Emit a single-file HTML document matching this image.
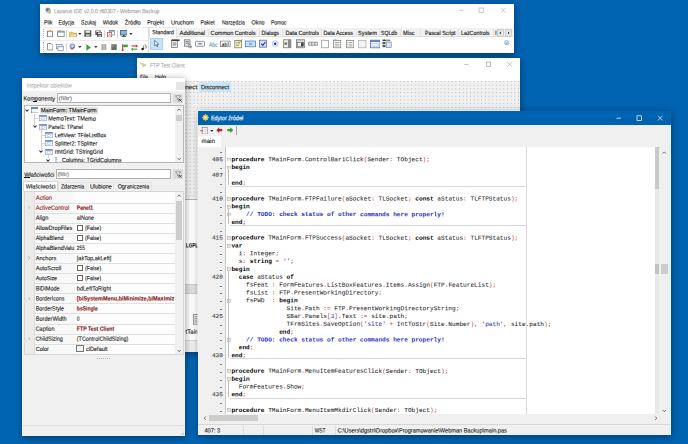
<!DOCTYPE html>
<html lang="pl"><head><meta charset="utf-8"><title>Lazarus IDE v2.0.0 r60307 - Webman Backup</title>
<style>
html,body{margin:0;padding:0;}
body{width:688px;height:444px;overflow:hidden;background:#0063b1;position:relative;font-family:'Liberation Sans',sans-serif;}
.a{position:absolute;box-sizing:border-box;}
.t{position:absolute;white-space:pre;line-height:1;transform-origin:0 50%;transform:rotate(0.04deg);-webkit-text-stroke:0.12px;}
.sh{box-shadow:0 1.5px 7px 0.5px rgba(0,0,0,.38);}
.sh2{box-shadow:0 0 0 0.9px rgba(200,222,243,.85),0 1.5px 7px 1px rgba(0,0,0,.38);}
.cl{overflow:hidden;}
.cd,.ln{font-family:'Liberation Mono',monospace;font-size:6.146px;color:#1c1c1c;-webkit-text-stroke:0.05px}.cd b{color:#000;-webkit-text-stroke:0}.cd b.cm{color:#1f2fc8}.ln{color:#383838;-webkit-text-stroke:0.08px}.cd b{font-weight:bold}.st{color:#2038c8}.sy{color:#d04040}
</style></head><body>
<div class="a sh" style="left:40.25px;top:3.80px;width:473.55px;height:49.70px;background:#fff;"></div>
<svg class="a" style="left:44.80px;top:7.00px;" width="6.60" height="7.00" viewBox="0 0 6.60 7.00"><circle cx="3" cy="3" r="2.6" fill="#8fa3c8"/><circle cx="4.3" cy="4.6" r="2.1" fill="#c9c089"/><circle cx="2.6" cy="2.6" r="1.1" fill="#4a64a8"/></svg>
<span id="t1" class="t" style="left:54px;top:8px;font-size:6.27px;color:#a0a0a0;transform:translate(0.00px,0.21px) rotate(0.04deg) scaleX(0.8253);">Lazarus IDE v2.0.0 r60307 - Webman Backup</span>
<svg class="a" style="left:454.80px;top:5.20px;" width="55.00" height="10.00" viewBox="0 0 55.00 10.00"><g stroke="#a6a6a6" stroke-width="0.6" fill="none"><path d="M4 5.3h4.6"/><rect x="24" y="3" width="4.4" height="4.4"/><path d="M46 3l4.6 4.6M50.6 3l-4.6 4.6"/></g></svg>
<span id="t2" class="t" style="left:44px;top:19px;font-size:6.27px;color:#111;transform:translate(0.00px,0.51px) rotate(0.04deg) scaleX(0.8306);">Plik</span>
<span id="t3" class="t" style="left:58px;top:19px;font-size:6.27px;color:#111;transform:translate(0.60px,0.51px) rotate(0.04deg) scaleX(0.8317);">Edycja</span>
<span id="t4" class="t" style="left:81px;top:19px;font-size:6.27px;color:#111;transform:translate(0.10px,0.51px) rotate(0.04deg) scaleX(0.7972);">Szukaj</span>
<span id="t5" class="t" style="left:102px;top:19px;font-size:6.27px;color:#111;transform:translate(0.75px,0.51px) rotate(0.04deg) scaleX(0.8751);">Widok</span>
<span id="t6" class="t" style="left:124px;top:19px;font-size:6.27px;color:#111;transform:translate(0.75px,0.51px) rotate(0.04deg) scaleX(0.8920);">Źródło</span>
<span id="t7" class="t" style="left:147px;top:19px;font-size:6.27px;color:#111;transform:translate(0.25px,0.51px) rotate(0.04deg) scaleX(0.8581);">Projekt</span>
<span id="t8" class="t" style="left:171px;top:19px;font-size:6.27px;color:#111;transform:translate(0.00px,0.51px) rotate(0.04deg) scaleX(0.8947);">Uruchom</span>
<span id="t9" class="t" style="left:200px;top:19px;font-size:6.27px;color:#111;transform:translate(0.60px,0.51px) rotate(0.04deg) scaleX(0.8120);">Pakiet</span>
<span id="t10" class="t" style="left:221px;top:19px;font-size:6.27px;color:#111;transform:translate(0.90px,0.51px) rotate(0.04deg) scaleX(0.8096);">Narzędzia</span>
<span id="t11" class="t" style="left:251px;top:19px;font-size:6.27px;color:#111;transform:translate(0.50px,0.51px) rotate(0.04deg) scaleX(0.8606);">Okno</span>
<span id="t12" class="t" style="left:271px;top:19px;font-size:6.27px;color:#111;transform:translate(0.00px,0.51px) rotate(0.04deg) scaleX(0.7941);">Pomoc</span>
<div class="a " style="left:40.25px;top:27.30px;width:108.00px;height:0.50px;background:#f0f0f0;"></div>
<div class="a " style="left:40.25px;top:39.60px;width:108.00px;height:0.50px;background:#ebebeb;"></div>
<div class="a " style="left:42.60px;top:28.50px;width:0.60px;height:9.50px;border-left:0.6px dotted #b5b5b5;"></div>
<div class="a " style="left:42.60px;top:42.00px;width:0.60px;height:9.50px;border-left:0.6px dotted #b5b5b5;"></div>
<svg class="a" style="left:46.60px;top:30.00px;" width="6.60" height="7.40" viewBox="0 0 6.60 7.40"><rect x="0.6" y="1.2" width="5" height="5.6" fill="#fff" stroke="#6e6e6e" stroke-width="0.8"/><rect x="1.6" y="0.2" width="2.4" height="1.4" fill="#e0a030"/></svg>
<svg class="a" style="left:56.60px;top:30.00px;" width="8.00" height="7.40" viewBox="0 0 8.00 7.40"><rect x="0.6" y="1.2" width="6.6" height="5.4" fill="#fff" stroke="#6e7a8c" stroke-width="0.8"/><rect x="0.6" y="1.2" width="6.6" height="1.4" fill="#8a97ad"/><rect x="2" y="0.2" width="2.2" height="1.2" fill="#e0a030"/></svg>
<div class="a " style="left:66.40px;top:29.50px;width:0.50px;height:8.50px;background:#d4d4d4;"></div>
<svg class="a" style="left:69.00px;top:30.00px;" width="8.40" height="7.40" viewBox="0 0 8.40 7.40"><path d="M0.5 2.2h2.6l0.8 0.9h3.8v3.8h-7.2z" fill="#f3d27a" stroke="#c79a3a" stroke-width="0.6"/><path d="M1.6 4h6.4l-1 2.9h-6.4z" fill="#f7e2a2" stroke="#c79a3a" stroke-width="0.5"/></svg>
<svg class="a" style="left:78.40px;top:32.80px;" width="3.80" height="2.20" viewBox="0 0 3.80 2.20"><path d="M0.2 0.1h3.4l-1.7 1.9z" fill="#333"/></svg>
<svg class="a" style="left:84.40px;top:30.20px;" width="7.60" height="7.00" viewBox="0 0 7.60 7.00"><rect x="0.3" y="0.3" width="7" height="6.4" fill="#5a5a5a"/><rect x="1.6" y="0.6" width="4.4" height="2.2" fill="#e8e8e8"/><rect x="2" y="4.2" width="3.6" height="2.5" fill="#bdbdbd"/></svg>
<svg class="a" style="left:94.80px;top:30.20px;" width="7.60" height="7.00" viewBox="0 0 7.60 7.00"><rect x="0.3" y="0.3" width="5.4" height="4.8" fill="#5a5a5a"/><rect x="1.2" y="0.6" width="3.4" height="1.6" fill="#e8e8e8"/><rect x="2" y="2.2" width="5.4" height="4.6" fill="#4d4d4d"/><rect x="3" y="2.6" width="3.4" height="1.5" fill="#e0e0e0"/><rect x="3.4" y="5" width="2.6" height="1.8" fill="#bdbdbd"/></svg>
<div class="a " style="left:104.40px;top:29.50px;width:0.50px;height:8.50px;background:#d4d4d4;"></div>
<svg class="a" style="left:107.00px;top:30.00px;" width="7.80" height="7.40" viewBox="0 0 7.80 7.40"><rect x="2.4" y="0.5" width="5" height="4.4" fill="#fff" stroke="#6f7f9f" stroke-width="0.7"/><rect x="2.4" y="0.5" width="5" height="1.2" fill="#7d8db0"/><rect x="0.5" y="2.6" width="4.2" height="4.4" fill="#fff" stroke="#b34444" stroke-width="0.7"/><path d="M1.6 5.8l1-1.6 1 1.6" stroke="#c03030" stroke-width="0.6" fill="none"/></svg>
<div class="a " style="left:116.90px;top:29.50px;width:0.50px;height:8.50px;background:#d4d4d4;"></div>
<svg class="a" style="left:119.80px;top:30.00px;" width="7.60" height="7.40" viewBox="0 0 7.60 7.40"><rect x="0.4" y="0.4" width="6.8" height="4.6" fill="#8db4e0" stroke="#3d5a80" stroke-width="0.8"/><rect x="3" y="5" width="1.6" height="1.2" fill="#3d4a5a"/><rect x="1.6" y="6.1" width="4.4" height="0.9" fill="#3d4a5a"/></svg>
<svg class="a" style="left:129.10px;top:32.80px;" width="3.80" height="2.20" viewBox="0 0 3.80 2.20"><path d="M0.2 0.1h3.4l-1.7 1.9z" fill="#333"/></svg>
<svg class="a" style="left:46.90px;top:43.40px;" width="6.40" height="7.40" viewBox="0 0 6.40 7.40"><path d="M0.5 0.5h3.6l1.8 1.8v4.6h-5.4z" fill="#fff" stroke="#7a7a7a" stroke-width="0.8"/></svg>
<svg class="a" style="left:56.40px;top:43.60px;" width="8.00" height="7.00" viewBox="0 0 8.00 7.00"><rect x="0.5" y="0.5" width="5.6" height="4.2" fill="#fff" stroke="#7b8ba8" stroke-width="0.7"/><rect x="2" y="2.2" width="5.6" height="4.2" fill="#fff" stroke="#7b8ba8" stroke-width="0.7"/><rect x="2" y="2.2" width="5.6" height="1.1" fill="#9fb0cc"/></svg>
<div class="a " style="left:66.40px;top:42.80px;width:0.50px;height:8.50px;background:#d4d4d4;"></div>
<svg class="a" style="left:68.80px;top:43.40px;" width="7.00" height="7.40" viewBox="0 0 7.00 7.40"><circle cx="3.4" cy="3.2" r="2.8" fill="#7f9fd8"/><circle cx="3.4" cy="3.2" r="1.4" fill="#c9d8f2"/><path d="M1.6 5l1.4 1.6 2.4-3" stroke="#d23030" stroke-width="1" fill="none"/></svg>
<svg class="a" style="left:78.40px;top:46.40px;" width="3.80" height="2.20" viewBox="0 0 3.80 2.20"><path d="M0.2 0.1h3.4l-1.7 1.9z" fill="#333"/></svg>
<svg class="a" style="left:86.40px;top:43.60px;" width="5.40" height="7.00" viewBox="0 0 5.40 7.00"><path d="M0.4 0.3l4.6 3.2-4.6 3.2z" fill="#3aa53a"/></svg>
<svg class="a" style="left:93.90px;top:46.40px;" width="3.80" height="2.20" viewBox="0 0 3.80 2.20"><path d="M0.2 0.1h3.4l-1.7 1.9z" fill="#333"/></svg>
<svg class="a" style="left:101.00px;top:43.80px;" width="6.00" height="6.60" viewBox="0 0 6.00 6.60"><rect x="0.4" y="0.2" width="5" height="6.2" fill="#a9a9a9"/><rect x="2.6" y="0.2" width="0.7" height="6.2" fill="#d9d9d9"/></svg>
<svg class="a" style="left:111.00px;top:43.80px;" width="6.00" height="6.60" viewBox="0 0 6.00 6.60"><rect x="0.3" y="0.3" width="5.4" height="5.8" fill="#6b6b6b"/><rect x="1.2" y="1.2" width="2" height="2" fill="#8d8d8d"/></svg>
<svg class="a" style="left:120.60px;top:43.60px;" width="7.20" height="7.40" viewBox="0 0 7.20 7.40"><rect x="1.2" y="0.3" width="1" height="6.4" fill="#a33"/><rect x="2.2" y="0.6" width="4.6" height="2.6" fill="#3aa53a"/><circle cx="1.6" cy="6.2" r="1" fill="#d23030"/></svg>
<svg class="a" style="left:131.00px;top:43.60px;" width="7.00" height="7.40" viewBox="0 0 7.00 7.40"><rect x="0.4" y="1.4" width="6" height="1.1" fill="#d23030"/><path d="M4.8 0.2l2 1.8-2 1.8z" fill="#d23030"/><rect x="0.8" y="4.6" width="5.6" height="1.1" fill="#3aa53a"/><path d="M2 3.4l-2 1.8 2 1.8z" fill="#3aa53a"/></svg>
<svg class="a" style="left:140.60px;top:44.40px;" width="6.00" height="6.60" viewBox="0 0 6.00 6.60"><path d="M3.6 0.4c1.6 0.4 2 2.4 1.2 4.2" stroke="#444" stroke-width="0.7" fill="none"/><circle cx="1.6" cy="5" r="1.3" fill="#222"/><rect x="2.5" y="1.4" width="0.6" height="3.8" fill="#222"/></svg>
<div class="a " style="left:148.40px;top:27.30px;width:0.50px;height:26.00px;background:#dcdcdc;"></div>
<div class="a " style="left:148.90px;top:27.60px;width:364.60px;height:9.60px;background:#f1f1f1;border-bottom:0.5px solid #dedede;"></div>
<div class="a " style="left:149.00px;top:27.40px;width:27.60px;height:10.20px;background:#fff;border:0.5px solid #e4e4e4;border-bottom:none;"></div>
<span id="t13" class="t" style="left:152px;top:29px;font-size:6.05px;color:#111;transform:translate(0.30px,0.20px) rotate(0.04deg) scaleX(0.8839);">Standard</span>
<span id="t14" class="t" style="left:179px;top:29px;font-size:6.05px;color:#111;transform:translate(0.60px,1.00px) rotate(0.04deg) scaleX(0.9561);">Additional</span>
<span id="t15" class="t" style="left:210px;top:29px;font-size:6.05px;color:#111;transform:translate(0.60px,1.00px) rotate(0.04deg) scaleX(0.9233);">Common Controls</span>
<span id="t16" class="t" style="left:261px;top:29px;font-size:6.05px;color:#111;transform:translate(0.50px,1.00px) rotate(0.04deg) scaleX(0.8674);">Dialogs</span>
<span id="t17" class="t" style="left:285px;top:29px;font-size:6.05px;color:#111;transform:translate(0.50px,1.00px) rotate(0.04deg) scaleX(0.9057);">Data Controls</span>
<span id="t18" class="t" style="left:323px;top:29px;font-size:6.05px;color:#111;transform:translate(0.50px,1.00px) rotate(0.04deg) scaleX(0.8776);">Data Access</span>
<span id="t19" class="t" style="left:358px;top:29px;font-size:6.05px;color:#111;transform:translate(0.00px,1.00px) rotate(0.04deg) scaleX(0.9417);">System</span>
<span id="t20" class="t" style="left:381px;top:29px;font-size:6.05px;color:#111;transform:translate(0.00px,1.00px) rotate(0.04deg) scaleX(0.8496);">SQLdb</span>
<span id="t21" class="t" style="left:403px;top:29px;font-size:6.05px;color:#111;transform:translate(0.00px,1.00px) rotate(0.04deg) scaleX(0.9243);">Misc</span>
<span id="t22" class="t" style="left:425px;top:29px;font-size:6.05px;color:#111;transform:translate(0.00px,1.00px) rotate(0.04deg) scaleX(0.8640);">Pascal Script</span>
<span id="t23" class="t" style="left:461px;top:29px;font-size:6.05px;color:#111;transform:translate(0.00px,1.00px) rotate(0.04deg) scaleX(0.8828);">LazControls</span>
<div class="a " style="left:207.80px;top:29.00px;width:0.50px;height:7.60px;background:#e2e2e2;"></div>
<div class="a " style="left:258.50px;top:29.00px;width:0.50px;height:7.60px;background:#e2e2e2;"></div>
<div class="a " style="left:282.00px;top:29.00px;width:0.50px;height:7.60px;background:#e2e2e2;"></div>
<div class="a " style="left:321.30px;top:29.00px;width:0.50px;height:7.60px;background:#e2e2e2;"></div>
<div class="a " style="left:355.50px;top:29.00px;width:0.50px;height:7.60px;background:#e2e2e2;"></div>
<div class="a " style="left:379.20px;top:29.00px;width:0.50px;height:7.60px;background:#e2e2e2;"></div>
<div class="a " style="left:399.80px;top:29.00px;width:0.50px;height:7.60px;background:#e2e2e2;"></div>
<div class="a " style="left:420.00px;top:29.00px;width:0.50px;height:7.60px;background:#e2e2e2;"></div>
<div class="a " style="left:458.30px;top:29.00px;width:0.50px;height:7.60px;background:#e2e2e2;"></div>
<div class="a " style="left:492.60px;top:29.00px;width:0.50px;height:7.60px;background:#e2e2e2;"></div>
<span id="t24" class="t" style="left:495px;top:29px;font-size:6.05px;color:#111;transform:translate(0.00px,1.00px) rotate(0.04deg);">I</span>
<svg class="a" style="left:497.20px;top:28.60px;" width="7.00" height="8.00" viewBox="0 0 7.00 8.00"><rect x="0.3" y="0.3" width="6.4" height="7.2" fill="#e6e6e6" stroke="#b4b4b4" stroke-width="0.5"/><path d="M2.6 2.2l-1.4 1.4 1.4 1.4z" fill="#222" transform="translate(1.2,0.3)"/></svg>
<svg class="a" style="left:504.60px;top:28.60px;" width="7.00" height="8.00" viewBox="0 0 7.00 8.00"><rect x="0.3" y="0.3" width="6.4" height="7.2" fill="#e6e6e6" stroke="#b4b4b4" stroke-width="0.5"/><path d="M1.8 2.2l1.4 1.4-1.4 1.4z" fill="#222" transform="translate(1.2,0.3)"/></svg>
<div class="a " style="left:150.00px;top:38.20px;width:13.00px;height:11.80px;background:#cce4f7;border:0.5px solid #a9cfee;"></div>
<svg class="a" style="left:153.60px;top:40.40px;" width="5.40" height="7.60" viewBox="0 0 5.40 7.60"><path d="M0.6 0.4v5.4l1.4-1.2 1 2.2 0.9-0.4-1-2.1h1.9z" fill="#fff" stroke="#1f3f78" stroke-width="0.6"/></svg>
<svg class="a" style="left:170.60px;top:39.40px;" width="9.40" height="9.40" viewBox="0 0 9.40 9.40"><rect x="0.6" y="1.2" width="6" height="7.4" fill="#e9e9e9" stroke="#6a6a6a" stroke-width="0.7"/><rect x="0.6" y="0.4" width="8" height="1.6" fill="#3c3c3c"/><path d="M1.8 4h3.4M1.8 5.8h3.4" stroke="#555" stroke-width="0.7"/></svg>
<svg class="a" style="left:184.20px;top:39.40px;" width="9.00" height="9.40" viewBox="0 0 9.00 9.40"><rect x="0.6" y="0.8" width="5.4" height="6.4" fill="#e4e4e4" stroke="#6a6a6a" stroke-width="0.7"/><path d="M1.6 2.6h3.2M1.6 4.2h3.2" stroke="#555" stroke-width="0.7"/><path d="M4.8 4.8v3.8l1-0.8 0.8 1.4 0.6-0.3-0.8-1.4h1.4z" fill="#fff" stroke="#333" stroke-width="0.5"/></svg>
<svg class="a" style="left:195.00px;top:39.40px;" width="10.20" height="9.40" viewBox="0 0 10.20 9.40"><rect x="0.5" y="2.3" width="9" height="5" rx="0.6" fill="#eef2f7" stroke="#68788f" stroke-width="0.7"/><path d="M3.6 4.8h3" stroke="#333" stroke-width="0.9"/></svg>
<span id="t25" class="t" style="left:208px;top:41px;font-size:6.05px;color:#5e86c4;transform:translate(0.90px,0.80px) rotate(0.04deg) scaleX(0.8153);">Abc</span>
<svg class="a" style="left:220.40px;top:39.40px;" width="10.80" height="9.40" viewBox="0 0 10.80 9.40"><rect x="0.5" y="2.1" width="9.6" height="5.6" fill="#fff" stroke="#7a7a7a" stroke-width="0.7"/><path d="M8.2 3v3.8" stroke="#222" stroke-width="0.6"/></svg>
<span id="t26" class="t" style="left:221px;top:42px;font-size:5.15px;color:#111;transform:translate(0.80px,0.13px) rotate(0.04deg) scaleX(0.9087);">ab</span>
<svg class="a" style="left:233.80px;top:39.40px;" width="9.00" height="9.40" viewBox="0 0 9.00 9.40"><rect x="0.8" y="1.4" width="6.6" height="7.4" fill="#f6f3d6" stroke="#7d7d5a" stroke-width="0.8"/><path d="M2 3.4h4M2 5h4M2 6.6h3" stroke="#6d8f4a" stroke-width="0.6"/><path d="M5 3.6l3.4-3.2" stroke="#c28b2c" stroke-width="1"/></svg>
<svg class="a" style="left:245.00px;top:39.40px;" width="11.00" height="9.40" viewBox="0 0 11.00 9.40"><rect x="0.5" y="2" width="10" height="5.8" fill="#bfe0f7" stroke="#4d88b8" stroke-width="0.8"/><path d="M4 5h3" stroke="#456" stroke-width="0.8"/></svg>
<svg class="a" style="left:259.20px;top:39.40px;" width="8.40" height="9.40" viewBox="0 0 8.40 9.40"><rect x="0.6" y="1.2" width="7" height="7" fill="#d6e2f7" stroke="#4f6fb0" stroke-width="0.8"/><path d="M2.2 4.6l1.6 1.8 2.6-3.4" stroke="#1a2f9a" stroke-width="1.1" fill="none"/></svg>
<svg class="a" style="left:272.00px;top:39.40px;" width="6.60" height="9.40" viewBox="0 0 6.60 9.40"><circle cx="3.2" cy="4.7" r="2.8" fill="#fff" stroke="#9aa8c8" stroke-width="0.7"/><circle cx="3.2" cy="4.7" r="1.2" fill="#1a1ad0"/></svg>
<svg class="a" style="left:283.40px;top:39.40px;" width="8.60" height="9.40" viewBox="0 0 8.60 9.40"><rect x="0.5" y="0.8" width="7.4" height="8" fill="#efefef" stroke="#6a6a6a" stroke-width="0.7"/><rect x="5" y="0.8" width="2.9" height="8" fill="#8a8a8a"/><rect x="1.4" y="3.4" width="2.8" height="2.4" fill="#777"/></svg>
<svg class="a" style="left:295.80px;top:39.40px;" width="9.00" height="9.40" viewBox="0 0 9.00 9.40"><rect x="0.5" y="0.8" width="8" height="8" fill="#d8d8d8" stroke="#6a6a6a" stroke-width="0.7"/><rect x="1.6" y="3.6" width="5.8" height="3.6" fill="#fff" stroke="#444" stroke-width="0.5"/><rect x="5" y="3.6" width="2.4" height="3.6" fill="#444"/></svg>
<svg class="a" style="left:307.60px;top:39.40px;" width="10.40" height="9.40" viewBox="0 0 10.40 9.40"><rect x="0.5" y="3.2" width="9.4" height="3" rx="0.5" fill="#e2e2e2" stroke="#6a6a6a" stroke-width="0.7"/><path d="M3.6 3.2v3M6.8 3.2v3" stroke="#6a6a6a" stroke-width="0.5"/></svg>
<svg class="a" style="left:320.80px;top:39.40px;" width="8.40" height="9.40" viewBox="0 0 8.40 9.40"><rect x="0.6" y="1.6" width="7" height="7.2" fill="#fff" stroke="#8a8a8a" stroke-width="0.7"/><rect x="0.6" y="0.6" width="3" height="1.3" fill="#c8c8c8"/></svg>
<svg class="a" style="left:333.40px;top:39.40px;" width="8.40" height="9.40" viewBox="0 0 8.40 9.40"><rect x="0.6" y="1.4" width="7.2" height="7.4" fill="#fff" stroke="#7a7a7a" stroke-width="0.7"/><path d="M1.8 3.4h4.8M1.8 5.2h4.8M1.8 7h4.8" stroke="#666" stroke-width="0.6"/><rect x="0.6" y="0.4" width="3" height="1.3" fill="#999"/></svg>
<svg class="a" style="left:345.60px;top:39.40px;" width="8.40" height="9.40" viewBox="0 0 8.40 9.40"><rect x="0.6" y="1.4" width="7.2" height="7.4" fill="#fff" stroke="#7a7a7a" stroke-width="0.7"/><path d="M3 3.4h3.6M3 5.2h3.6M3 7h3.6" stroke="#666" stroke-width="0.6"/><path d="M1.4 3.4h0.9M1.4 5.2h0.9M1.4 7h0.9" stroke="#3a7a3a" stroke-width="0.7"/></svg>
<svg class="a" style="left:358.00px;top:39.40px;" width="8.60" height="9.40" viewBox="0 0 8.60 9.40"><rect x="0.6" y="1.4" width="7.4" height="7.4" fill="#f4f4f4" stroke="#a8a8a8" stroke-width="0.7"/></svg>
<svg class="a" style="left:369.60px;top:39.40px;" width="10.60" height="9.40" viewBox="0 0 10.60 9.40"><rect x="0.6" y="1.2" width="9.4" height="7.6" fill="#fff" stroke="#4c6cb0" stroke-width="0.8"/><rect x="0.6" y="1.2" width="9.4" height="1.8" fill="#5d7fc8"/><rect x="2" y="4.6" width="6.6" height="2.8" fill="#e8eefa" stroke="#8aa0d0" stroke-width="0.4"/></svg>
<svg class="a" style="left:382.40px;top:39.40px;" width="9.80" height="9.40" viewBox="0 0 9.80 9.40"><rect x="0.5" y="0.6" width="4" height="1.5" fill="#444"/><rect x="5.2" y="0.6" width="3" height="1.5" fill="#777"/><rect x="0.5" y="3" width="3" height="2.2" fill="#555"/><rect x="0.5" y="6" width="3" height="2.2" fill="#555"/><rect x="4.2" y="3" width="5" height="5.6" fill="#dfe6f5" stroke="#5a6fa8" stroke-width="0.6"/></svg>
<svg class="a" style="left:504.40px;top:40.00px;" width="5.40" height="5.40" viewBox="0 0 5.40 5.40"><circle cx="2.7" cy="2.7" r="2.2" fill="#e9f1fb" stroke="#6a9ad8" stroke-width="0.6"/><path d="M1.7 2l1 0.9 1-0.9M1.7 3.2l1 0.9 1-0.9" stroke="#2a62b8" stroke-width="0.5" fill="none"/></svg>
<div class="a sh" style="left:136.50px;top:58.40px;width:383.50px;height:293.60px;background:#fff;"></div>
<svg class="a" style="left:140.40px;top:61.80px;" width="6.80" height="5.60" viewBox="0 0 6.80 5.60"><path d="M0.4 0.6l5.8 2.4-2.2 0.5-0.4 1.8-1.2-1.6z" fill="#cfe3a8" stroke="#9dbb6a" stroke-width="0.5"/></svg>
<span id="t27" class="t" style="left:150px;top:62px;font-size:6.27px;color:#a8a8a8;transform:translate(0.00px,0.41px) rotate(0.04deg) scaleX(0.8143);">FTP Test Client</span>
<svg class="a" style="left:460.00px;top:60.00px;" width="56.00" height="10.00" viewBox="0 0 56.00 10.00"><g stroke="#9a9a9a" stroke-width="0.6" fill="none"><path d="M4.2 4.6h4.6"/><rect x="26.3" y="2" width="4.4" height="4.4"/><path d="M47.2 2l4.6 4.6M51.8 2l-4.6 4.6"/></g></svg>
<span id="t28" class="t" style="left:140px;top:73px;font-size:6.27px;color:#111;transform:translate(0.00px,0.91px) rotate(0.04deg) scaleX(0.7910);">File</span>
<span id="t29" class="t" style="left:155px;top:73px;font-size:6.27px;color:#111;transform:translate(0.00px,0.91px) rotate(0.04deg) scaleX(0.8530);">Help</span>
<svg class="a" style="left:136.50px;top:81.00px;" width="383.50" height="118.20" viewBox="0 0 383.50 118.20"><defs><pattern id="dg" x="1.2" y="0" width="3.6880" height="3.6880" patternUnits="userSpaceOnUse"><rect x="0" y="0" width="0.75" height="0.75" fill="#9a9a9a"/></pattern></defs><rect width="100%" height="100%" fill="#f0f0f0"/><rect width="100%" height="100%" fill="url(#dg)"/></svg>
<span id="t30" class="t" style="left:173px;top:84px;font-size:6.27px;color:#111;transform:translate(0.50px,0.21px) rotate(0.04deg) scaleX(1.0151);">Connect</span>
<div class="a " style="left:199.40px;top:82.00px;width:31.20px;height:10.20px;background:#cce4f7;"></div>
<span id="t31" class="t" style="left:201px;top:84px;font-size:6.27px;color:#111;transform:translate(0.00px,0.21px) rotate(0.04deg) scaleX(0.9031);">Disconnect</span>
<div class="a " style="left:137.00px;top:199.10px;width:382.50px;height:0.60px;background:#a9b9cc;"></div>
<div class="a " style="left:137.00px;top:199.70px;width:382.50px;height:140.50px;background:#fff;"></div>
<span id="t32" class="t" style="left:185px;top:242px;font-size:6.05px;color:#222;font-weight:bold;transform:translate(0.80px,0.43px) rotate(0.04deg) scaleX(0.7688);">LGPL</span>
<div class="a " style="left:137.00px;top:284.00px;width:382.50px;height:10.20px;background:#e1e1e1;border-top:0.5px solid #cfcfcf;border-bottom:0.5px solid #cfcfcf;"></div>
<svg class="a" style="left:193.00px;top:314.00px;" width="5.40" height="11.00" viewBox="0 0 5.40 11.00"><rect x="0.4" y="0.4" width="6" height="9.8" fill="#e9e9e9" stroke="#777" stroke-width="0.7"/><path d="M1.5 2.6h3.6M1.5 4.4h3.6M1.5 6.2h3.6M1.5 8h3.6" stroke="#888" stroke-width="0.6"/></svg>
<span id="t33" class="t" style="left:185px;top:328px;font-size:6.05px;color:#222;transform:translate(0.60px,0.70px) rotate(0.04deg);">tTain</span>
<div class="a " style="left:137.00px;top:340.00px;width:382.50px;height:11.60px;background:#f0f0f0;border-top:0.5px solid #d7d7d7;"></div>
<div class="a sh" style="left:21.90px;top:77.75px;width:163.00px;height:357.85px;background:#f0f0f0;"></div>
<div class="a " style="left:21.90px;top:77.75px;width:163.00px;height:13.60px;background:#fff;"></div>
<span id="t34" class="t" style="left:26px;top:82px;font-size:6.27px;color:#b0b0b0;transform:translate(0.40px,0.41px) rotate(0.04deg) scaleX(0.8669);">Inspektor obiektów</span>
<div class="a " style="left:176.00px;top:82.00px;width:8.70px;height:7.60px;background:#e5e5e5;"></div>
<span id="t35" class="t" style="left:23px;top:95px;font-size:6.27px;color:#111;transform:translate(0.60px,0.61px) rotate(0.04deg) scaleX(0.8923);">Komponenty</span>
<div class="a " style="left:33.20px;top:101.20px;width:3.80px;height:0.50px;background:#111;"></div>
<div class="a " style="left:56.50px;top:93.30px;width:114.80px;height:10.20px;background:#fff;border:0.6px solid #b2b2b2;"></div>
<span id="t36" class="t" style="left:58px;top:96px;font-size:5.82px;color:#777;transform:translate(0.60px,0.30px) rotate(0.04deg) scaleX(1.1523);">(filtr)</span>
<div class="a " style="left:173.40px;top:93.60px;width:9.60px;height:9.60px;background:#dcdcdc;"></div>
<svg class="a" style="left:174.60px;top:94.80px;" width="7.40" height="7.40" viewBox="0 0 7.40 7.40"><path d="M0.6 0.8h5l-1.9 2.4v2.4l-1.2-0.8v-1.6z" fill="#f4f4f4" stroke="#666" stroke-width="0.6"/><path d="M4 4l2.6 2.6M6.6 4l-2.6 2.6" stroke="#333" stroke-width="0.9"/></svg>
<div class="a " style="left:23.50px;top:105.20px;width:160.40px;height:57.60px;background:#fff;border:0.6px solid #b8b8b8;"></div>
<div class="a " style="left:34.40px;top:113.50px;width:0.50px;height:11.20px;border-left:0.5px solid #d4d4d4;"></div>
<div class="a " style="left:34.60px;top:118.40px;width:3.80px;height:0.50px;border-top:0.5px solid #d4d4d4;"></div>
<div class="a " style="left:41.20px;top:129.90px;width:0.50px;height:19.70px;border-left:0.5px solid #d4d4d4;"></div>
<div class="a " style="left:41.40px;top:135.00px;width:3.80px;height:0.50px;border-top:0.5px solid #d4d4d4;"></div>
<div class="a " style="left:41.40px;top:143.30px;width:3.80px;height:0.50px;border-top:0.5px solid #d4d4d4;"></div>
<div class="a " style="left:47.90px;top:154.80px;width:0.50px;height:3.10px;border-left:0.5px solid #d4d4d4;"></div>
<div class="a " style="left:39.70px;top:106.50px;width:58.40px;height:7.20px;background:#e2e2e2;"></div>
<svg class="a" style="left:25.40px;top:108.70px;" width="4.00" height="3.00" viewBox="0 0 4.00 3.00"><path d="M0.4 0.5l1.6 1.7 1.6-1.7" stroke="#333" stroke-width="1.05" fill="none"/></svg>
<svg class="a" style="left:30.60px;top:106.90px;" width="7.80" height="6.40" viewBox="0 0 7.80 6.40"><rect x="0.4" y="0.4" width="7" height="5.6" fill="#f3f7fd" stroke="#6b7fa6" stroke-width="0.7"/><rect x="0.4" y="0.4" width="7" height="1.5" fill="#5b74ac"/></svg>
<span id="t37" class="t" style="left:41px;top:107px;font-size:6.16px;color:#111;transform:translate(0.00px,0.30px) rotate(0.04deg) scaleX(0.8898);">MainForm: TMainForm</span>
<svg class="a" style="left:38.60px;top:115.40px;" width="8.00" height="6.20" viewBox="0 0 8.00 6.20"><rect x="0.4" y="0.4" width="7.2" height="5.4" fill="#f6f9fe" stroke="#7f97cc" stroke-width="0.6"/><rect x="0.4" y="0.4" width="7.2" height="1.2" fill="#5570b4"/><rect x="2.2" y="2.8" width="3.4" height="1.8" fill="#fff" stroke="#8fa8d8" stroke-width="0.45"/></svg>
<span id="t38" class="t" style="left:48px;top:115px;font-size:6.16px;color:#111;transform:translate(0.30px,0.60px) rotate(0.04deg) scaleX(0.9033);">MemoText: TMemo</span>
<svg class="a" style="left:32.50px;top:125.30px;" width="4.00" height="3.00" viewBox="0 0 4.00 3.00"><path d="M0.4 0.5l1.6 1.7 1.6-1.7" stroke="#333" stroke-width="1.05" fill="none"/></svg>
<svg class="a" style="left:38.60px;top:123.70px;" width="8.00" height="6.20" viewBox="0 0 8.00 6.20"><rect x="0.4" y="0.4" width="7.2" height="5.4" fill="#f6f9fe" stroke="#7f97cc" stroke-width="0.6"/><rect x="0.4" y="0.4" width="7.2" height="1.2" fill="#5570b4"/><rect x="2.2" y="2.8" width="3.4" height="1.8" fill="#fff" stroke="#8fa8d8" stroke-width="0.45"/></svg>
<span id="t39" class="t" style="left:48px;top:123px;font-size:6.16px;color:#111;transform:translate(0.30px,0.90px) rotate(0.04deg) scaleX(0.8237);">Panel1: TPanel</span>
<svg class="a" style="left:45.40px;top:132.00px;" width="8.00" height="6.20" viewBox="0 0 8.00 6.20"><rect x="0.4" y="0.4" width="7.2" height="5.4" fill="#f6f9fe" stroke="#7f97cc" stroke-width="0.6"/><rect x="0.4" y="0.4" width="7.2" height="1.2" fill="#5570b4"/><rect x="2.2" y="2.8" width="3.4" height="1.8" fill="#fff" stroke="#8fa8d8" stroke-width="0.45"/></svg>
<span id="t40" class="t" style="left:54px;top:132px;font-size:6.16px;color:#111;transform:translate(0.80px,0.20px) rotate(0.04deg) scaleX(0.8436);">LeftView: TFileListBox</span>
<svg class="a" style="left:45.40px;top:140.30px;" width="8.00" height="6.20" viewBox="0 0 8.00 6.20"><rect x="0.4" y="0.4" width="7.2" height="5.4" fill="#f6f9fe" stroke="#7f97cc" stroke-width="0.6"/><rect x="0.4" y="0.4" width="7.2" height="1.2" fill="#5570b4"/><rect x="2.2" y="2.8" width="3.4" height="1.8" fill="#fff" stroke="#8fa8d8" stroke-width="0.45"/></svg>
<span id="t41" class="t" style="left:54px;top:140px;font-size:6.16px;color:#111;transform:translate(0.80px,0.50px) rotate(0.04deg) scaleX(0.8683);">Splitter2: TSplitter</span>
<svg class="a" style="left:39.00px;top:150.20px;" width="4.00" height="3.00" viewBox="0 0 4.00 3.00"><path d="M0.4 0.5l1.6 1.7 1.6-1.7" stroke="#333" stroke-width="1.05" fill="none"/></svg>
<svg class="a" style="left:45.40px;top:148.60px;" width="8.00" height="6.20" viewBox="0 0 8.00 6.20"><rect x="0.4" y="0.4" width="7.2" height="5.4" fill="#f6f9fe" stroke="#7f97cc" stroke-width="0.6"/><rect x="0.4" y="0.4" width="7.2" height="1.2" fill="#5570b4"/><rect x="2.2" y="2.8" width="3.4" height="1.8" fill="#fff" stroke="#8fa8d8" stroke-width="0.45"/></svg>
<span id="t42" class="t" style="left:54px;top:148px;font-size:6.16px;color:#111;transform:translate(0.80px,0.80px) rotate(0.04deg) scaleX(0.8713);">rmtGrid: TStringGrid</span>
<svg class="a" style="left:45.70px;top:158.50px;" width="4.00" height="3.00" viewBox="0 0 4.00 3.00"><path d="M0.4 0.5l1.6 1.7 1.6-1.7" stroke="#333" stroke-width="1.05" fill="none"/></svg>
<svg class="a" style="left:54.00px;top:156.90px;" width="5.00" height="6.00" viewBox="0 0 5.00 6.00"><path d="M0.6 0.4h2.6M1.9 0.4v5M1.9 2.2h2M1.9 5.2h2.2" stroke="#7aa2d8" stroke-width="0.7" fill="none"/></svg>
<span id="t43" class="t" style="left:62px;top:157px;font-size:6.16px;color:#111;transform:translate(0.00px,0.10px) rotate(0.04deg) scaleX(0.8841);">Columns: TGridColumns</span>
<div class="a " style="left:175.00px;top:105.80px;width:8.30px;height:56.40px;background:#f0f0f0;"></div>
<svg class="a" style="left:175.00px;top:107.85px;" width="8.30" height="4.00" viewBox="0 0 8.30 4.00"><path d="M2.55 2.6l1.6-1.7 1.6 1.7" stroke="#505050" stroke-width="0.8" fill="none"/></svg>
<svg class="a" style="left:175.00px;top:156.55px;" width="8.30" height="4.00" viewBox="0 0 8.30 4.00"><path d="M2.55 1l1.6 1.7 1.6-1.7" stroke="#505050" stroke-width="0.8" fill="none"/></svg>
<div class="a " style="left:175.60px;top:114.50px;width:6.70px;height:6.80px;background:#cdcdcd;"></div>
<span id="t44" class="t" style="left:24px;top:171px;font-size:6.27px;color:#111;transform:translate(0.30px,0.81px) rotate(0.04deg) scaleX(0.8761);">Właściwości</span>
<div class="a " style="left:24.40px;top:177.40px;width:5.60px;height:0.50px;background:#111;"></div>
<div class="a " style="left:55.60px;top:169.30px;width:115.70px;height:9.70px;background:#fff;border:0.6px solid #b2b2b2;"></div>
<span id="t45" class="t" style="left:57px;top:172px;font-size:5.38px;color:#777;transform:translate(0.40px,0.12px) rotate(0.04deg) scaleX(1.0787);">(filtr)</span>
<div class="a " style="left:173.40px;top:169.40px;width:9.60px;height:9.60px;background:#dcdcdc;"></div>
<svg class="a" style="left:174.60px;top:170.60px;" width="7.40" height="7.40" viewBox="0 0 7.40 7.40"><path d="M0.6 0.8h5l-1.9 2.4v2.4l-1.2-0.8v-1.6z" fill="#f4f4f4" stroke="#666" stroke-width="0.6"/><path d="M4 4l2.6 2.6M6.6 4l-2.6 2.6" stroke="#333" stroke-width="0.9"/></svg>
<div class="a " style="left:23.40px;top:181.00px;width:34.20px;height:10.40px;background:#fff;border:0.5px solid #d9d9d9;border-bottom:none;"></div>
<span id="t46" class="t" style="left:25px;top:183px;font-size:6.16px;color:#111;transform:translate(0.80px,0.40px) rotate(0.04deg) scaleX(0.8886);">Właściwości</span>
<span id="t47" class="t" style="left:60px;top:183px;font-size:6.16px;color:#111;transform:translate(0.90px,0.60px) rotate(0.04deg) scaleX(0.8542);">Zdarzenia</span>
<span id="t48" class="t" style="left:89px;top:183px;font-size:6.16px;color:#111;transform:translate(0.90px,0.60px) rotate(0.04deg) scaleX(0.9047);">Ulubione</span>
<span id="t49" class="t" style="left:117px;top:183px;font-size:6.16px;color:#111;transform:translate(0.70px,0.60px) rotate(0.04deg) scaleX(0.8709);">Ograniczenia</span>
<div class="a " style="left:58.00px;top:182.40px;width:0.50px;height:8.60px;background:#e2e2e2;"></div>
<div class="a " style="left:85.50px;top:182.40px;width:0.50px;height:8.60px;background:#e2e2e2;"></div>
<div class="a " style="left:113.30px;top:182.40px;width:0.50px;height:8.60px;background:#e2e2e2;"></div>
<div class="a " style="left:151.30px;top:182.40px;width:0.50px;height:8.60px;background:#e2e2e2;"></div>
<div class="a " style="left:57.60px;top:182.20px;width:93.80px;height:0.50px;background:#e2e2e2;"></div>
<div class="a " style="left:24.30px;top:191.10px;width:159.60px;height:163.80px;background:#f8f8f8;border:0.5px solid #d6d6d6;"></div>
<div class="a " style="left:24.80px;top:191.60px;width:9.60px;height:162.80px;background:#ebebeb;"></div>
<div class="a " style="left:34.30px;top:191.60px;width:0.50px;height:162.80px;background:#dcdcdc;"></div>
<div class="a " style="left:74.50px;top:191.60px;width:0.60px;height:162.80px;background:#d0d0d0;"></div>
<div class="a " style="left:75.10px;top:191.60px;width:99.90px;height:162.80px;background:#fdfdfd;"></div>
<span id="t50" class="t" style="left:35px;top:194px;font-size:6.05px;color:#8c1515;transform:translate(0.70px,0.70px) rotate(0.04deg) scaleX(0.9752);">Action</span>
<div class="a " style="left:34.80px;top:202.54px;width:140.20px;height:0.50px;background:#e0e0e0;"></div>
<svg class="a" style="left:27.70px;top:205.78px;" width="2.60" height="3.60" viewBox="0 0 2.60 3.60"><path d="M0.4 0.4l1.5 1.4-1.5 1.4" stroke="#8a8a8a" stroke-width="0.6" fill="none"/></svg>
<span id="t51" class="t" style="left:35px;top:204px;font-size:6.05px;color:#8c1515;transform:translate(0.70px,0.78px) rotate(0.04deg) scaleX(0.9313);">ActiveControl</span>
<span id="t52" class="t" style="left:76px;top:204px;font-size:6.05px;color:#8c1515;font-weight:bold;transform:translate(0.80px,0.71px) rotate(0.04deg) scaleX(0.8408);">Panel1</span>
<div class="a " style="left:34.80px;top:212.62px;width:140.20px;height:0.50px;background:#e0e0e0;"></div>
<span id="t53" class="t" style="left:35px;top:214px;font-size:6.05px;color:#222;transform:translate(0.70px,0.86px) rotate(0.04deg) scaleX(0.9363);">Align</span>
<span id="t54" class="t" style="left:76px;top:214px;font-size:6.05px;color:#222;transform:translate(0.80px,0.86px) rotate(0.04deg) scaleX(0.9022);">alNone</span>
<div class="a " style="left:34.80px;top:222.70px;width:140.20px;height:0.50px;background:#e0e0e0;"></div>
<span id="t55" class="t" style="left:35px;top:224px;font-size:6.05px;color:#222;transform:translate(0.70px,0.94px) rotate(0.04deg) scaleX(0.9075);">AllowDropFiles</span>
<div class="a " style="left:76.80px;top:224.84px;width:5.80px;height:5.80px;background:#fff;border:0.5px solid #666;"></div>
<span id="t56" class="t" style="left:85px;top:224px;font-size:6.05px;color:#222;transform:translate(0.00px,0.94px) rotate(0.04deg) scaleX(0.8602);">(False)</span>
<div class="a " style="left:34.80px;top:232.78px;width:140.20px;height:0.50px;background:#e0e0e0;"></div>
<span id="t57" class="t" style="left:35px;top:235px;font-size:6.05px;color:#222;transform:translate(0.70px,0.02px) rotate(0.04deg) scaleX(0.8985);">AlphaBlend</span>
<div class="a " style="left:76.80px;top:234.92px;width:5.80px;height:5.80px;background:#fff;border:0.5px solid #666;"></div>
<span id="t58" class="t" style="left:85px;top:235px;font-size:6.05px;color:#222;transform:translate(0.00px,0.02px) rotate(0.04deg) scaleX(0.8602);">(False)</span>
<div class="a " style="left:34.80px;top:242.86px;width:140.20px;height:0.50px;background:#e0e0e0;"></div>
<span id="t59" class="t" style="left:35px;top:245px;font-size:6.05px;color:#222;transform:translate(0.70px,0.10px) rotate(0.04deg) scaleX(0.9061);">AlphaBlendValu</span>
<span id="t60" class="t" style="left:76px;top:245px;font-size:6.05px;color:#222;transform:translate(0.80px,0.10px) rotate(0.04deg) scaleX(0.8120);">255</span>
<div class="a " style="left:34.80px;top:252.94px;width:140.20px;height:0.50px;background:#e0e0e0;"></div>
<svg class="a" style="left:27.70px;top:256.18px;" width="2.60" height="3.60" viewBox="0 0 2.60 3.60"><path d="M0.4 0.4l1.5 1.4-1.5 1.4" stroke="#8a8a8a" stroke-width="0.6" fill="none"/></svg>
<span id="t61" class="t" style="left:35px;top:255px;font-size:6.05px;color:#222;transform:translate(0.70px,0.18px) rotate(0.04deg) scaleX(0.9238);">Anchors</span>
<span id="t62" class="t" style="left:76px;top:255px;font-size:6.05px;color:#222;transform:translate(0.80px,0.18px) rotate(0.04deg) scaleX(0.9161);">[akTop,akLeft]</span>
<div class="a " style="left:34.80px;top:263.02px;width:140.20px;height:0.50px;background:#e0e0e0;"></div>
<span id="t63" class="t" style="left:35px;top:265px;font-size:6.05px;color:#222;transform:translate(0.70px,0.26px) rotate(0.04deg) scaleX(0.9250);">AutoScroll</span>
<div class="a " style="left:76.80px;top:265.16px;width:5.80px;height:5.80px;background:#fff;border:0.5px solid #666;"></div>
<span id="t64" class="t" style="left:85px;top:265px;font-size:6.05px;color:#222;transform:translate(0.00px,0.26px) rotate(0.04deg) scaleX(0.8602);">(False)</span>
<div class="a " style="left:34.80px;top:273.10px;width:140.20px;height:0.50px;background:#e0e0e0;"></div>
<span id="t65" class="t" style="left:35px;top:275px;font-size:6.05px;color:#222;transform:translate(0.70px,0.34px) rotate(0.04deg) scaleX(0.8840);">AutoSize</span>
<div class="a " style="left:76.80px;top:275.24px;width:5.80px;height:5.80px;background:#fff;border:0.5px solid #666;"></div>
<span id="t66" class="t" style="left:85px;top:275px;font-size:6.05px;color:#222;transform:translate(0.00px,0.34px) rotate(0.04deg) scaleX(0.8602);">(False)</span>
<div class="a " style="left:34.80px;top:283.18px;width:140.20px;height:0.50px;background:#e0e0e0;"></div>
<span id="t67" class="t" style="left:35px;top:285px;font-size:6.05px;color:#222;transform:translate(0.70px,0.42px) rotate(0.04deg) scaleX(0.9152);">BiDiMode</span>
<span id="t68" class="t" style="left:76px;top:285px;font-size:6.05px;color:#222;transform:translate(0.80px,0.42px) rotate(0.04deg) scaleX(0.9188);">bdLeftToRight</span>
<div class="a " style="left:34.80px;top:293.26px;width:140.20px;height:0.50px;background:#e0e0e0;"></div>
<svg class="a" style="left:27.70px;top:296.50px;" width="2.60" height="3.60" viewBox="0 0 2.60 3.60"><path d="M0.4 0.4l1.5 1.4-1.5 1.4" stroke="#8a8a8a" stroke-width="0.6" fill="none"/></svg>
<span id="t69" class="t" style="left:35px;top:295px;font-size:6.05px;color:#222;transform:translate(0.70px,0.50px) rotate(0.04deg) scaleX(0.8800);">BorderIcons</span>
<span id="t70" class="t" style="left:76px;top:295px;font-size:6.05px;color:#8c1515;font-weight:bold;transform:translate(0.80px,0.43px) rotate(0.04deg) scaleX(0.9039);">[biSystemMenu,biMinimize,biMaximiz</span>
<div class="a " style="left:34.80px;top:303.34px;width:140.20px;height:0.50px;background:#e0e0e0;"></div>
<span id="t71" class="t" style="left:35px;top:305px;font-size:6.05px;color:#222;transform:translate(0.70px,0.58px) rotate(0.04deg) scaleX(0.8988);">BorderStyle</span>
<span id="t72" class="t" style="left:76px;top:305px;font-size:6.05px;color:#8c1515;font-weight:bold;transform:translate(0.80px,0.51px) rotate(0.04deg) scaleX(0.8331);">bsSingle</span>
<div class="a " style="left:34.80px;top:313.42px;width:140.20px;height:0.50px;background:#e0e0e0;"></div>
<span id="t73" class="t" style="left:35px;top:315px;font-size:6.05px;color:#222;transform:translate(0.70px,0.66px) rotate(0.04deg) scaleX(0.9222);">BorderWidth</span>
<span id="t74" class="t" style="left:76px;top:315px;font-size:6.05px;color:#222;transform:translate(0.80px,0.66px) rotate(0.04deg) scaleX(0.8286);">0</span>
<div class="a " style="left:34.80px;top:323.50px;width:140.20px;height:0.50px;background:#e0e0e0;"></div>
<span id="t75" class="t" style="left:35px;top:325px;font-size:6.05px;color:#222;transform:translate(0.70px,0.74px) rotate(0.04deg) scaleX(0.8970);">Caption</span>
<span id="t76" class="t" style="left:76px;top:325px;font-size:6.05px;color:#8c1515;font-weight:bold;transform:translate(0.80px,0.67px) rotate(0.04deg) scaleX(0.8606);">FTP Test Client</span>
<div class="a " style="left:34.80px;top:333.58px;width:140.20px;height:0.50px;background:#e0e0e0;"></div>
<svg class="a" style="left:27.70px;top:336.82px;" width="2.60" height="3.60" viewBox="0 0 2.60 3.60"><path d="M0.4 0.4l1.5 1.4-1.5 1.4" stroke="#8a8a8a" stroke-width="0.6" fill="none"/></svg>
<span id="t77" class="t" style="left:35px;top:335px;font-size:6.05px;color:#222;transform:translate(0.70px,0.82px) rotate(0.04deg) scaleX(0.8924);">ChildSizing</span>
<span id="t78" class="t" style="left:76px;top:335px;font-size:6.05px;color:#222;transform:translate(0.80px,0.82px) rotate(0.04deg) scaleX(0.8961);">(TControlChildSizing)</span>
<div class="a " style="left:34.80px;top:343.66px;width:140.20px;height:0.50px;background:#e0e0e0;"></div>
<span id="t79" class="t" style="left:35px;top:345px;font-size:6.05px;color:#222;transform:translate(0.70px,0.90px) rotate(0.04deg) scaleX(0.9130);">Color</span>
<div class="a " style="left:76.40px;top:345.10px;width:7.20px;height:7.20px;background:#f4f4f4;border:0.5px solid #777;"></div>
<span id="t80" class="t" style="left:86px;top:345px;font-size:6.05px;color:#222;transform:translate(0.00px,0.90px) rotate(0.04deg) scaleX(0.9178);">clDefault</span>
<div class="a " style="left:175.00px;top:191.60px;width:8.40px;height:162.80px;background:#f0f0f0;"></div>
<svg class="a" style="left:175.00px;top:193.65px;" width="8.40" height="4.00" viewBox="0 0 8.40 4.00"><path d="M2.60 2.6l1.6-1.7 1.6 1.7" stroke="#505050" stroke-width="0.8" fill="none"/></svg>
<svg class="a" style="left:175.00px;top:348.75px;" width="8.40" height="4.00" viewBox="0 0 8.40 4.00"><path d="M2.60 1l1.6 1.7 1.6-1.7" stroke="#505050" stroke-width="0.8" fill="none"/></svg>
<div class="a " style="left:175.60px;top:200.80px;width:6.80px;height:39.20px;background:#cdcdcd;"></div>
<div class="a " style="left:97.00px;top:358.40px;width:13.00px;height:0.60px;border-top:0.6px dotted #b0b0b0;"></div>
<div class="a " style="left:21.90px;top:425.20px;width:163.00px;height:0.50px;background:#e0e0e0;"></div>
<svg class="a" style="left:180.00px;top:430.60px;" width="4.40" height="4.40" viewBox="0 0 4.40 4.40"><path d="M3.6 0.6v0.8M3.6 2v0.8M3.6 3.4v0.8M2.2 2v0.8M2.2 3.4v0.8M0.8 3.4v0.8" stroke="#b8b8b8" stroke-width="0.8"/></svg>
<div class="a sh" style="left:197.50px;top:111.00px;width:473.30px;height:324.30px;background:#e6eef6;"></div>
<div class="a " style="left:196.80px;top:111.00px;width:0.70px;height:241.00px;background:rgba(255,255,255,.5);"></div>
<div class="a " style="left:196.80px;top:110.30px;width:323.20px;height:0.70px;background:rgba(255,255,255,.5);"></div>
<div class="a " style="left:197.50px;top:111.00px;width:471.10px;height:323.90px;background:#f0f0f0;"></div>
<div class="a " style="left:197.50px;top:111.00px;width:473.30px;height:13.70px;background:#0063b1;"></div>
<svg class="a" style="left:201.80px;top:114.20px;" width="7.00" height="7.00" viewBox="0 0 7.00 7.00"><circle cx="3.5" cy="3.5" r="2.6" fill="#f2d46a" stroke="#c9a53a" stroke-width="0.6"/><circle cx="3.5" cy="3.5" r="1" fill="#fff7d0"/><path d="M3.5 0v1M3.5 6v1M0 3.5h1M6 3.5h1M1 1l0.8 0.8M5.2 5.2l0.8 0.8M6 1l-0.8 0.8M1.8 5.2l-0.8 0.8" stroke="#e8c85a" stroke-width="0.8"/></svg>
<span id="t81" class="t" style="left:210px;top:115px;font-size:6.61px;color:#fff;transform:translate(0.90px,0.21px) rotate(0.04deg) scaleX(0.8291);">Edytor źródeł</span>
<svg class="a" style="left:612.00px;top:112.60px;" width="56.00" height="10.00" viewBox="0 0 56.00 10.00"><g stroke="#fff" stroke-width="0.7" fill="none"><path d="M4.4 5.2h4.6"/><rect x="25" y="2.8" width="4.6" height="4.6"/><path d="M45.9 2.7l4.7 4.7M50.6 2.7l-4.7 4.7"/></g></svg>
<svg class="a" style="left:199.60px;top:126.60px;" width="8.60" height="7.60" viewBox="0 0 8.60 7.60"><rect x="2.2" y="0.4" width="5" height="6.6" fill="#fff" stroke="#8c8484" stroke-width="0.7"/><path d="M0.2 3.8h2.6" stroke="#b03030" stroke-width="0.8"/><path d="M3.4 2.6h2.6M3.4 4.6h2.6" stroke="#b88" stroke-width="0.5"/></svg>
<svg class="a" style="left:209.50px;top:129.60px;" width="3.80" height="2.20" viewBox="0 0 3.80 2.20"><path d="M0.2 0.1h3.4l-1.7 1.9z" fill="#333"/></svg>
<svg class="a" style="left:216.40px;top:127.20px;" width="6.60" height="6.40" viewBox="0 0 6.60 6.40"><path d="M0.3 3.2l3-2.9v1.8h3v2.2h-3v1.8z" fill="#b8202a"/></svg>
<svg class="a" style="left:226.90px;top:127.20px;" width="6.60" height="6.40" viewBox="0 0 6.60 6.40"><path d="M6.3 3.2l-3-2.9v1.8h-3v2.2h3v1.8z" fill="#3a9a34"/></svg>
<div class="a " style="left:236.40px;top:126.40px;width:0.50px;height:8.40px;background:#a8a8a8;"></div>
<div class="a " style="left:198.00px;top:136.00px;width:23.00px;height:10.60px;background:#fff;"></div>
<span id="t82" class="t" style="left:201px;top:138px;font-size:6.27px;color:#111;transform:translate(0.60px,0.01px) rotate(0.04deg) scaleX(0.9707);">main</span>
<div class="a " style="left:198.00px;top:146.65px;width:471.00px;height:0.50px;background:#c8c8c8;"></div>
<div class="a " style="left:198.00px;top:147.15px;width:457.00px;height:266.45px;background:#fff;"></div>
<div class="a " style="left:198.00px;top:147.15px;width:26.80px;height:266.45px;background:#f0f0f0;"></div>
<div class="a " style="left:224.80px;top:147.15px;width:0.50px;height:266.45px;background:#c8c8c8;"></div>
<div class="a " style="left:526.10px;top:147.15px;width:0.50px;height:266.45px;background:#dadada;"></div>
<div class="a" style="left:220.4px;top:152.36px;width:1.3px;height:0.8px;background:#7a7a7a"></div>
<span class="t ln" style="left:211px;top:157px;transform:translate(0.94px,0.20px) rotate(0.04deg);">405</span>
<span class="t cd" style="left:231px;top:157px;transform:translate(0.40px,0.20px) rotate(0.03deg);"><b>procedure</b> TMainForm<span class="sy">.</span>ControlBar1Click<span class="sy">(</span>Sender<span class="sy">:</span> TObject<span class="sy">)</span><span class="sy">;</span></span>
<div class="a" style="left:220.4px;top:168.04px;width:1.3px;height:0.8px;background:#7a7a7a"></div>
<span class="t cd" style="left:231px;top:165px;transform:translate(0.40px,0.04px) rotate(0.03deg);"><b>begin</b></span>
<span class="t ln" style="left:211px;top:172px;transform:translate(0.94px,0.87px) rotate(0.04deg);">407</span>
<div class="a" style="left:220.4px;top:183.71px;width:1.3px;height:0.8px;background:#7a7a7a"></div>
<span class="t cd" style="left:231px;top:180px;transform:translate(0.40px,0.71px) rotate(0.03deg);"><b>end</b><span class="sy">;</span></span>
<div class="a" style="left:220.4px;top:191.55px;width:1.3px;height:0.8px;background:#7a7a7a"></div>
<span class="t ln" style="left:211px;top:196px;transform:translate(0.94px,0.39px) rotate(0.04deg);">410</span>
<span class="t cd" style="left:231px;top:196px;transform:translate(0.40px,0.39px) rotate(0.03deg);"><b>procedure</b> TMainForm<span class="sy">.</span>FTPFailure<span class="sy">(</span>aSocket<span class="sy">:</span> TLSocket<span class="sy">;</span> <b>const</b> aStatus<span class="sy">:</span> TLFTPStatus<span class="sy">)</span><span class="sy">;</span></span>
<div class="a" style="left:220.4px;top:207.22px;width:1.3px;height:0.8px;background:#7a7a7a"></div>
<span class="t cd" style="left:231px;top:204px;transform:translate(0.40px,0.22px) rotate(0.03deg);"><b>begin</b></span>
<div class="a" style="left:220.4px;top:215.06px;width:1.3px;height:0.8px;background:#7a7a7a"></div>
<span class="t cd" style="left:231px;top:212px;transform:translate(0.40px,0.06px) rotate(0.03deg);">    <b class="cm">// TODO: check status of other commands here properly!</b></span>
<div class="a" style="left:220.4px;top:222.90px;width:1.3px;height:0.8px;background:#7a7a7a"></div>
<span class="t cd" style="left:231px;top:219px;transform:translate(0.40px,0.90px) rotate(0.03deg);"><b>end</b><span class="sy">;</span></span>
<div class="a" style="left:220.4px;top:230.73px;width:1.3px;height:0.8px;background:#7a7a7a"></div>
<span class="t ln" style="left:211px;top:235px;transform:translate(0.94px,0.57px) rotate(0.04deg);">415</span>
<span class="t cd" style="left:231px;top:235px;transform:translate(0.40px,0.57px) rotate(0.03deg);"><b>procedure</b> TMainForm<span class="sy">.</span>FTPSuccess<span class="sy">(</span>aSocket<span class="sy">:</span> TLSocket<span class="sy">;</span> <b>const</b> aStatus<span class="sy">:</span> TLFTPStatus<span class="sy">)</span><span class="sy">;</span></span>
<div class="a" style="left:220.4px;top:246.41px;width:1.3px;height:0.8px;background:#7a7a7a"></div>
<span class="t cd" style="left:231px;top:243px;transform:translate(0.40px,0.41px) rotate(0.03deg);"><b>var</b></span>
<div class="a" style="left:220.4px;top:254.24px;width:1.3px;height:0.8px;background:#7a7a7a"></div>
<span class="t cd" style="left:231px;top:251px;transform:translate(0.40px,0.24px) rotate(0.03deg);">  i<span class="sy">:</span> Integer<span class="sy">;</span></span>
<div class="a" style="left:220.4px;top:262.08px;width:1.3px;height:0.8px;background:#7a7a7a"></div>
<span class="t cd" style="left:231px;top:259px;transform:translate(0.40px,0.08px) rotate(0.03deg);">  s<span class="sy">:</span> <b>string</b> <span class="sy">=</span> <span class="st">&#x27;&#x27;</span><span class="sy">;</span></span>
<div class="a" style="left:220.4px;top:269.92px;width:1.3px;height:0.8px;background:#7a7a7a"></div>
<span class="t cd" style="left:231px;top:266px;transform:translate(0.40px,0.92px) rotate(0.03deg);"><b>begin</b></span>
<span class="t ln" style="left:211px;top:274px;transform:translate(0.94px,0.76px) rotate(0.04deg);">420</span>
<span class="t cd" style="left:231px;top:274px;transform:translate(0.40px,0.76px) rotate(0.03deg);">  <b>case</b> aStatus <b>of</b></span>
<div class="a" style="left:220.4px;top:285.59px;width:1.3px;height:0.8px;background:#7a7a7a"></div>
<span class="t cd" style="left:231px;top:282px;transform:translate(0.40px,0.59px) rotate(0.03deg);">    fsFeat <span class="sy">:</span> FormFeatures<span class="sy">.</span>ListBoxFeatures<span class="sy">.</span>Items<span class="sy">.</span>Assign<span class="sy">(</span>FTP<span class="sy">.</span>FeatureList<span class="sy">)</span><span class="sy">;</span></span>
<div class="a" style="left:220.4px;top:293.43px;width:1.3px;height:0.8px;background:#7a7a7a"></div>
<span class="t cd" style="left:231px;top:290px;transform:translate(0.40px,0.43px) rotate(0.03deg);">    fsList <span class="sy">:</span> FTP<span class="sy">.</span>PresentWorkingDirectory<span class="sy">;</span></span>
<div class="a" style="left:220.4px;top:301.27px;width:1.3px;height:0.8px;background:#7a7a7a"></div>
<span class="t cd" style="left:231px;top:298px;transform:translate(0.40px,0.27px) rotate(0.03deg);">    fsPWD  <span class="sy">:</span> <b>begin</b></span>
<div class="a" style="left:220.4px;top:309.10px;width:1.3px;height:0.8px;background:#7a7a7a"></div>
<span class="t cd" style="left:231px;top:306px;transform:translate(0.40px,0.10px) rotate(0.03deg);">               Site<span class="sy">.</span>Path <span class="sy">:</span><span class="sy">=</span> FTP<span class="sy">.</span>PresentWorkingDirectoryString<span class="sy">;</span></span>
<span class="t ln" style="left:211px;top:313px;transform:translate(0.94px,0.94px) rotate(0.04deg);">425</span>
<span class="t cd" style="left:231px;top:313px;transform:translate(0.40px,0.94px) rotate(0.03deg);">               SBar<span class="sy">.</span>Panels<span class="sy">[</span><span class="st">3</span><span class="sy">]</span><span class="sy">.</span>Text <span class="sy">:</span><span class="sy">=</span> site<span class="sy">.</span>path<span class="sy">;</span></span>
<div class="a" style="left:220.4px;top:324.78px;width:1.3px;height:0.8px;background:#7a7a7a"></div>
<span class="t cd" style="left:231px;top:321px;transform:translate(0.40px,0.78px) rotate(0.03deg);">               TFrmSites<span class="sy">.</span>SaveOption<span class="sy">(</span><span class="st">&#x27;site&#x27;</span> <span class="sy">+</span> IntToStr<span class="sy">(</span>Site<span class="sy">.</span>Number<span class="sy">)</span><span class="sy">,</span> <span class="st">&#x27;path&#x27;</span><span class="sy">,</span> site<span class="sy">.</span>path<span class="sy">)</span><span class="sy">;</span></span>
<div class="a" style="left:220.4px;top:332.61px;width:1.3px;height:0.8px;background:#7a7a7a"></div>
<span class="t cd" style="left:231px;top:329px;transform:translate(0.40px,0.61px) rotate(0.03deg);">             <b>end</b><span class="sy">;</span></span>
<div class="a" style="left:220.4px;top:340.45px;width:1.3px;height:0.8px;background:#7a7a7a"></div>
<span class="t cd" style="left:231px;top:337px;transform:translate(0.40px,0.45px) rotate(0.03deg);">    <b class="cm">// TODO: check status of other commands here properly!</b></span>
<div class="a" style="left:220.4px;top:348.29px;width:1.3px;height:0.8px;background:#7a7a7a"></div>
<span class="t cd" style="left:231px;top:345px;transform:translate(0.40px,0.29px) rotate(0.03deg);">  <b>end</b><span class="sy">;</span></span>
<span class="t ln" style="left:211px;top:353px;transform:translate(0.94px,0.13px) rotate(0.04deg);">430</span>
<span class="t cd" style="left:231px;top:353px;transform:translate(0.40px,0.13px) rotate(0.03deg);"><b>end</b><span class="sy">;</span></span>
<div class="a" style="left:220.4px;top:363.96px;width:1.3px;height:0.8px;background:#7a7a7a"></div>
<div class="a" style="left:220.4px;top:371.80px;width:1.3px;height:0.8px;background:#7a7a7a"></div>
<span class="t cd" style="left:231px;top:368px;transform:translate(0.40px,0.80px) rotate(0.03deg);"><b>procedure</b> TMainForm<span class="sy">.</span>MenuItemFeaturesClick<span class="sy">(</span>Sender<span class="sy">:</span> TObject<span class="sy">)</span><span class="sy">;</span></span>
<div class="a" style="left:220.4px;top:379.64px;width:1.3px;height:0.8px;background:#7a7a7a"></div>
<span class="t cd" style="left:231px;top:376px;transform:translate(0.40px,0.64px) rotate(0.03deg);"><b>begin</b></span>
<div class="a" style="left:220.4px;top:387.47px;width:1.3px;height:0.8px;background:#7a7a7a"></div>
<span class="t cd" style="left:231px;top:384px;transform:translate(0.40px,0.47px) rotate(0.03deg);">  FormFeatures<span class="sy">.</span>Show<span class="sy">;</span></span>
<span class="t ln" style="left:211px;top:392px;transform:translate(0.94px,0.31px) rotate(0.04deg);">435</span>
<span class="t cd" style="left:231px;top:392px;transform:translate(0.40px,0.31px) rotate(0.03deg);"><b>end</b><span class="sy">;</span></span>
<div class="a" style="left:220.4px;top:403.15px;width:1.3px;height:0.8px;background:#7a7a7a"></div>
<div class="a" style="left:220.4px;top:410.98px;width:1.3px;height:0.8px;background:#7a7a7a"></div>
<span class="t cd" style="left:231px;top:407px;transform:translate(0.40px,0.98px) rotate(0.03deg);"><b>procedure</b> TMainForm<span class="sy">.</span>MenuItemMkdirClick<span class="sy">(</span>Sender<span class="sy">:</span> TObject<span class="sy">)</span><span class="sy">;</span></span>
<div class="a " style="left:230.20px;top:185.93px;width:295.90px;height:0.50px;background:#d8d8d8;"></div>
<div class="a " style="left:230.20px;top:225.11px;width:295.90px;height:0.50px;background:#d8d8d8;"></div>
<div class="a " style="left:230.20px;top:358.34px;width:295.90px;height:0.50px;background:#d8d8d8;"></div>
<div class="a " style="left:230.20px;top:397.53px;width:295.90px;height:0.50px;background:#d8d8d8;"></div>
<svg class="a" style="left:226.90px;top:157.70px;" width="3.80" height="3.80" viewBox="0 0 3.80 3.80"><rect x="0.3" y="0.3" width="3.1" height="3.1" fill="#fff" stroke="#a2a2a2" stroke-width="0.55"/><path d="M1.1 1.85h1.5" stroke="#8a8a8a" stroke-width="0.5"/></svg>
<svg class="a" style="left:226.90px;top:165.54px;" width="3.80" height="3.80" viewBox="0 0 3.80 3.80"><rect x="0.3" y="0.3" width="3.1" height="3.1" fill="#fff" stroke="#a2a2a2" stroke-width="0.55"/><path d="M1.1 1.85h1.5" stroke="#8a8a8a" stroke-width="0.5"/></svg>
<svg class="a" style="left:226.90px;top:196.88px;" width="3.80" height="3.80" viewBox="0 0 3.80 3.80"><rect x="0.3" y="0.3" width="3.1" height="3.1" fill="#fff" stroke="#a2a2a2" stroke-width="0.55"/><path d="M1.1 1.85h1.5" stroke="#8a8a8a" stroke-width="0.5"/></svg>
<svg class="a" style="left:226.90px;top:204.72px;" width="3.80" height="3.80" viewBox="0 0 3.80 3.80"><rect x="0.3" y="0.3" width="3.1" height="3.1" fill="#fff" stroke="#a2a2a2" stroke-width="0.55"/><path d="M1.1 1.85h1.5" stroke="#8a8a8a" stroke-width="0.5"/></svg>
<svg class="a" style="left:226.90px;top:212.56px;" width="3.80" height="3.80" viewBox="0 0 3.80 3.80"><rect x="0.3" y="0.3" width="3.1" height="3.1" fill="#fff" stroke="#a2a2a2" stroke-width="0.55"/><path d="M1.1 1.85h1.5" stroke="#8a8a8a" stroke-width="0.5"/></svg>
<svg class="a" style="left:226.90px;top:236.07px;" width="3.80" height="3.80" viewBox="0 0 3.80 3.80"><rect x="0.3" y="0.3" width="3.1" height="3.1" fill="#fff" stroke="#a2a2a2" stroke-width="0.55"/><path d="M1.1 1.85h1.5" stroke="#8a8a8a" stroke-width="0.5"/></svg>
<svg class="a" style="left:226.90px;top:243.91px;" width="3.80" height="3.80" viewBox="0 0 3.80 3.80"><rect x="0.3" y="0.3" width="3.1" height="3.1" fill="#fff" stroke="#a2a2a2" stroke-width="0.55"/><path d="M1.1 1.85h1.5" stroke="#8a8a8a" stroke-width="0.5"/></svg>
<svg class="a" style="left:226.90px;top:267.42px;" width="3.80" height="3.80" viewBox="0 0 3.80 3.80"><rect x="0.3" y="0.3" width="3.1" height="3.1" fill="#fff" stroke="#a2a2a2" stroke-width="0.55"/><path d="M1.1 1.85h1.5" stroke="#8a8a8a" stroke-width="0.5"/></svg>
<svg class="a" style="left:226.90px;top:298.77px;" width="3.80" height="3.80" viewBox="0 0 3.80 3.80"><rect x="0.3" y="0.3" width="3.1" height="3.1" fill="#fff" stroke="#a2a2a2" stroke-width="0.55"/><path d="M1.1 1.85h1.5" stroke="#8a8a8a" stroke-width="0.5"/></svg>
<svg class="a" style="left:226.90px;top:337.95px;" width="3.80" height="3.80" viewBox="0 0 3.80 3.80"><rect x="0.3" y="0.3" width="3.1" height="3.1" fill="#fff" stroke="#a2a2a2" stroke-width="0.55"/><path d="M1.1 1.85h1.5" stroke="#8a8a8a" stroke-width="0.5"/></svg>
<svg class="a" style="left:226.90px;top:369.30px;" width="3.80" height="3.80" viewBox="0 0 3.80 3.80"><rect x="0.3" y="0.3" width="3.1" height="3.1" fill="#fff" stroke="#a2a2a2" stroke-width="0.55"/><path d="M1.1 1.85h1.5" stroke="#8a8a8a" stroke-width="0.5"/></svg>
<svg class="a" style="left:226.90px;top:377.14px;" width="3.80" height="3.80" viewBox="0 0 3.80 3.80"><rect x="0.3" y="0.3" width="3.1" height="3.1" fill="#fff" stroke="#a2a2a2" stroke-width="0.55"/><path d="M1.1 1.85h1.5" stroke="#8a8a8a" stroke-width="0.5"/></svg>
<svg class="a" style="left:226.90px;top:408.48px;" width="3.80" height="3.80" viewBox="0 0 3.80 3.80"><rect x="0.3" y="0.3" width="3.1" height="3.1" fill="#fff" stroke="#a2a2a2" stroke-width="0.55"/><path d="M1.1 1.85h1.5" stroke="#8a8a8a" stroke-width="0.5"/></svg>
<div class="a " style="left:228.20px;top:169.34px;width:0.50px;height:15.77px;background:#bdbdbd;"></div>
<div class="a " style="left:228.20px;top:208.52px;width:0.50px;height:15.77px;background:#bdbdbd;"></div>
<div class="a " style="left:228.20px;top:271.22px;width:0.50px;height:86.31px;background:#bdbdbd;"></div>
<div class="a " style="left:228.20px;top:380.94px;width:0.50px;height:15.77px;background:#bdbdbd;"></div>
<div class="a " style="left:655.20px;top:147.15px;width:4.30px;height:266.45px;background:#e9e9e9;"></div>
<div class="a " style="left:655.20px;top:147.15px;width:4.30px;height:41.85px;background:#c9c9c9;"></div>
<div class="a " style="left:655.20px;top:264.30px;width:4.30px;height:10.20px;background:#c2c2c2;"></div>
<div class="a " style="left:659.50px;top:147.15px;width:0.60px;height:266.45px;background:#dcdcdc;"></div>
<div class="a " style="left:660.20px;top:147.15px;width:8.60px;height:266.45px;background:#f0f0f0;"></div>
<svg class="a" style="left:660.20px;top:150.70px;" width="8.60" height="4.00" viewBox="0 0 8.60 4.00"><path d="M2.70 2.6l1.6-1.7 1.6 1.7" stroke="#505050" stroke-width="0.8" fill="none"/></svg>
<svg class="a" style="left:660.20px;top:408.65px;" width="8.60" height="4.00" viewBox="0 0 8.60 4.00"><path d="M2.70 1l1.6 1.7 1.6-1.7" stroke="#505050" stroke-width="0.8" fill="none"/></svg>
<div class="a " style="left:660.80px;top:264.30px;width:7.00px;height:10.20px;background:#cdcdcd;"></div>
<div class="a " style="left:198.00px;top:413.60px;width:462.20px;height:8.60px;background:#f0f0f0;"></div>
<svg class="a" style="left:203.00px;top:416.00px;" width="4.00" height="4.40" viewBox="0 0 4.00 4.40"><path d="M2.9 0.5l-1.7 1.7 1.7 1.7" stroke="#505050" stroke-width="0.8" fill="none"/></svg>
<svg class="a" style="left:654.00px;top:416.00px;" width="4.00" height="4.40" viewBox="0 0 4.00 4.40"><path d="M1.1 0.5l1.7 1.7-1.7 1.7" stroke="#505050" stroke-width="0.8" fill="none"/></svg>
<div class="a " style="left:208.90px;top:414.80px;width:49.20px;height:6.40px;background:#cdcdcd;"></div>
<div class="a " style="left:198.00px;top:424.20px;width:471.50px;height:0.50px;background:#d7d7d7;"></div>
<span id="t83" class="t" style="left:204px;top:427px;font-size:6.05px;color:#222;transform:translate(0.40px,0.50px) rotate(0.04deg) scaleX(0.9395);">407: 3</span>
<div class="a " style="left:243.00px;top:425.60px;width:0.50px;height:9.00px;background:#dcdcdc;"></div>
<div class="a " style="left:262.60px;top:425.60px;width:0.50px;height:9.00px;background:#dcdcdc;"></div>
<div class="a " style="left:311.50px;top:425.60px;width:0.50px;height:9.00px;background:#dcdcdc;"></div>
<div class="a " style="left:334.50px;top:425.60px;width:0.50px;height:9.00px;background:#dcdcdc;"></div>
<span id="t84" class="t" style="left:314px;top:427px;font-size:6.05px;color:#222;transform:translate(0.70px,0.50px) rotate(0.04deg) scaleX(0.7886);">WST</span>
<span id="t85" class="t" style="left:337px;top:427px;font-size:6.05px;color:#222;transform:translate(0.40px,0.50px) rotate(0.04deg) scaleX(0.9293);">C:\Users\dgstn\Dropbox\Programowanie\Webman Backup\main.pas</span>
</body></html>
